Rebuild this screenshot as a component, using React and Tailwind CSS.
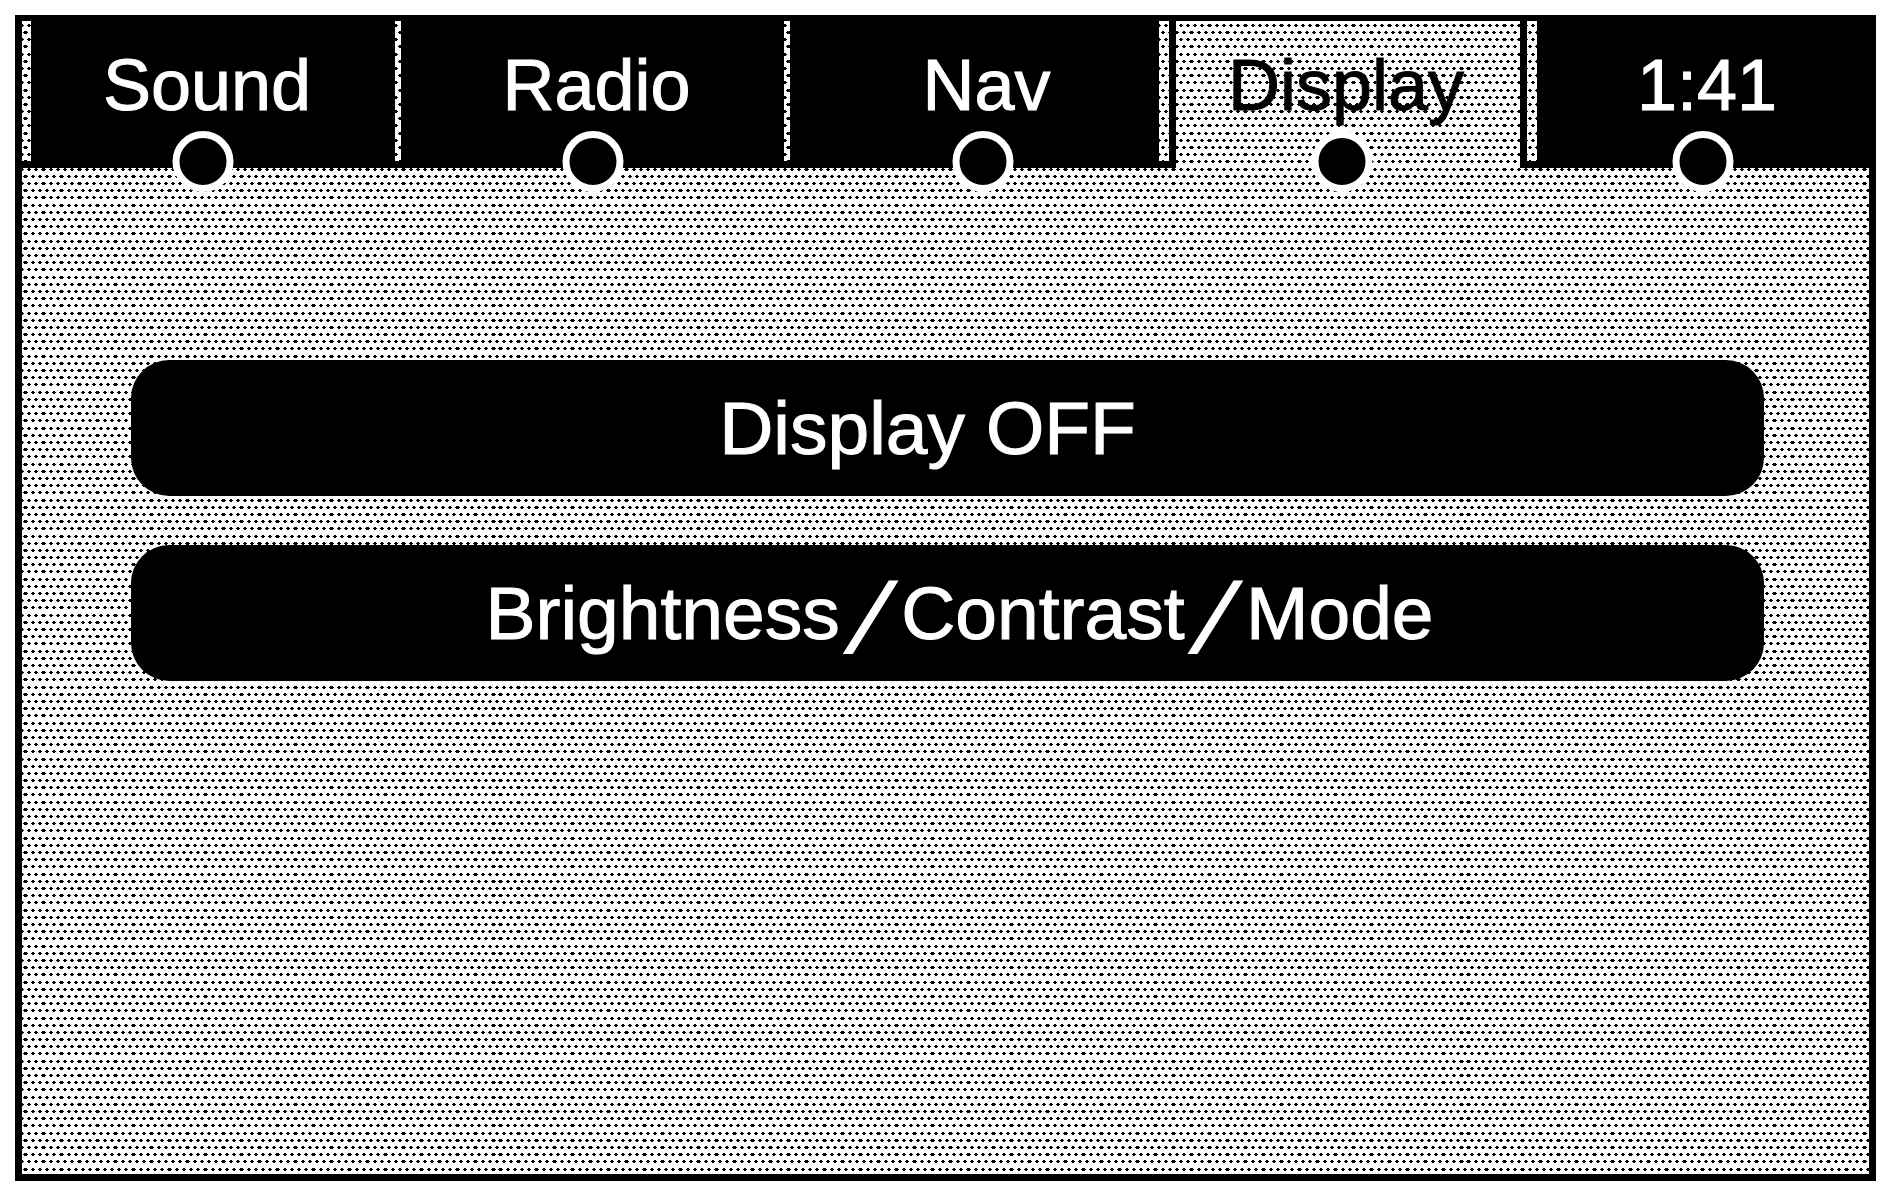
const PITCH_X = 7.197;
const PITCH_Y = 7.1938;
const ROWS = 240;
const COLUMNS = 400;

// One row of halftone dots: a four pixel core with a two pixel cap above and below.
function dotRow(start) {
  let d = "";
  for (let i = 0; i < COLUMNS; i++) {
    const position = start + i * PITCH_X;
    const left = Math.floor(position);
    const width = Math.floor(position + 4.2) - left;
    d += `M${left} 0h${width}v1h-${width}z`;
    d += `M${left + 1} -1h${width - 2}v3h-${width - 2}z`;
  }
  return d;
}

const evenRow = dotRow(-1.6);
const oddRow = dotRow(-5.2);
const rowTops = Array.from({ length: ROWS }, (_, n) => Math.floor(4.26 + n * PITCH_Y));

function Halftone() {
  return (
    <svg className="absolute inset-0 h-full w-full" shapeRendering="crispEdges" aria-hidden="true">
      <defs>
        <path id="even-row" d={evenRow} />
        <path id="odd-row" d={oddRow} />
      </defs>
      {rowTops.map((y, n) => (
        <use key={y} href={n % 2 ? "#odd-row" : "#even-row"} y={y} />
      ))}
    </svg>
  );
}

function Tab({ label, selected = false, className, innerClassName = "" }) {
  return (
    <button
      type="button"
      role="tab"
      aria-selected={selected}
      className={`h-[147px] ${selected ? "border-x-7 border-black text-black" : "bg-black text-white"} ${className}`}
    >
      <span className={`relative flex h-full justify-center pt-7 pl-2 ${innerClassName}`}>
        <span className="absolute top-[110px] left-1/2 size-[61px] -translate-x-1/2 rounded-full border-7 border-white bg-black" />
        <span className="relative">{label}</span>
      </span>
    </button>
  );
}

function Gap({ className }) {
  return <div className={`border-b-7 border-black ${className}`} />;
}

function MenuButton({ children, className }) {
  return (
    <button
      type="button"
      className={`flex h-[136px] w-full items-center justify-center rounded-[38px] bg-black text-[75px] leading-none text-white ${className}`}
    >
      {children}
    </button>
  );
}

function Slash() {
  return <span className="mr-[18px] ml-[26px] align-[-14px] text-[104px] leading-[0] [-webkit-text-stroke:2px_currentColor]">⁄</span>;
}

export default function App() {
  return (
    <div className="flex min-h-screen bg-white pt-[15px] pr-[11px] pb-[10px] pl-[15px] font-['Liberation_Sans',Arial,sans-serif] text-black">
      <main className="relative flex-1 border-7 border-t-6 border-black [-webkit-text-stroke:1px_currentColor]">
        <Halftone />
        <div className="relative">
          <div role="tablist" className="flex h-[147px] text-[72px] leading-none">
            <Gap className="w-[9px]" />
            <Tab label="Sound" className="flex-[364]" innerClassName="mr-5" />
            <Gap className="w-[6px]" />
            <Tab label="Radio" className="flex-[383]" />
            <Gap className="w-[6px]" />
            <Tab label="Nav" className="flex-[369]" innerClassName="ml-4" />
            <Gap className="w-[10px]" />
            <Tab label="Display" selected className="flex-[344]" innerClassName="mr-3" />
            <Gap className="w-[10px]" />
            <Tab label="1:41" className="flex-[332]" />
          </div>
          <div className="mt-[192px] mr-[105px] ml-[109px] flex flex-col gap-[49px]">
            <MenuButton className="pr-10">Display OFF</MenuButton>
            <MenuButton className="pl-6">
              <span>Brightness<Slash />Contrast<Slash />Mode</span>
            </MenuButton>
          </div>
        </div>
      </main>
    </div>
  );
}
